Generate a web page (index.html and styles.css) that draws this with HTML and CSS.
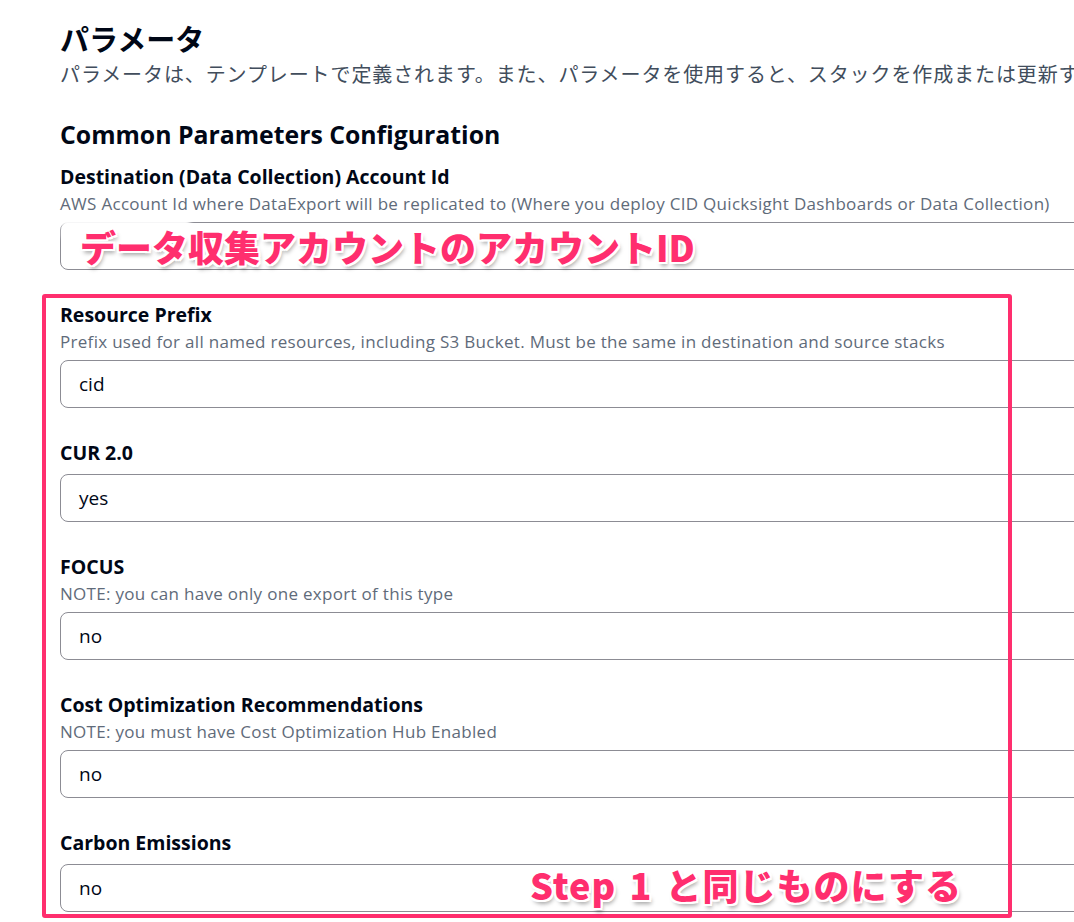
FILE: index.html
```html
<!DOCTYPE html>
<html lang="ja">
<head>
  <meta charset="UTF-8">
  <meta name="viewport" content="width=device-width, initial-scale=1.0">
  <title>パラメータ</title>
  <link rel="stylesheet" href="styles.css">
</head>
<body>
  <div class="page">
    <h1 class="title">パラメータ</h1>
    <p class="lead">パラメータは、テンプレートで定義されます。また、パラメータを使用すると、スタックを作成または更新するときにカスタム値を入力できます。</p>

    <h2 class="section">Common Parameters Configuration</h2>

    <div class="fields">
      <div class="field">
        <div class="label">Destination (Data Collection) Account Id</div>
        <div class="desc">AWS Account Id where DataExport will be replicated to (Where you deploy CID Quicksight Dashboards or Data Collection)</div>
        <div class="input"></div>
      </div>
      <div class="field">
        <div class="label">Resource Prefix</div>
        <div class="desc">Prefix used for all named resources, including S3 Bucket. Must be the same in destination and source stacks</div>
        <div class="input">cid</div>
      </div>
      <div class="field">
        <div class="label">CUR 2.0</div>
        <div class="input no-desc">yes</div>
      </div>
      <div class="field">
        <div class="label">FOCUS</div>
        <div class="desc">NOTE: you can have only one export of this type</div>
        <div class="input">no</div>
      </div>
      <div class="field">
        <div class="label">Cost Optimization Recommendations</div>
        <div class="desc">NOTE: you must have Cost Optimization Hub Enabled</div>
        <div class="input">no</div>
      </div>
      <div class="field">
        <div class="label">Carbon Emissions</div>
        <div class="input no-desc">no</div>
      </div>
    </div>
  </div>

  <!-- annotations drawn over the screenshot -->
  <div class="blur-patch"></div>
  <div class="note note-account">データ収集アカウントのアカウントID</div>
  <div class="frame"></div>
  <div class="note note-step">Step 1 と同じものにする</div>
</body>
</html>
```

FILE: styles.css
```css
html, body { margin: 0; height: 100%; }
body { font-family: 'Open Sans', 'Noto Sans CJK JP', sans-serif; color: #000716; background: #fff; overflow: hidden; position: relative; }
.page { padding: 20px 0 0 60px; white-space: nowrap; }
.title { font-family: 'Noto Sans CJK JP', sans-serif; font-size: 29px; line-height: 36px; font-weight: 700; margin: 0; }
.lead { font-family: 'Noto Sans CJK JP', sans-serif; font-size: 20px; letter-spacing: 0.9px; line-height: 28px; color: #414d5c; margin: 4px 0 0; }
.section { font-size: 24.8px; line-height: 32px; font-weight: 700; margin: 30px 0 0; }
.fields { margin-top: 15px; display: flex; flex-direction: column; gap: 33px; }
.label { font-size: 19.5px; line-height: 24px; font-weight: 700; margin-bottom: 3px; }
.desc { font-size: 17px; letter-spacing: 0.3px; line-height: 24px; color: #5f6b7a; }
.input { margin-top: 6px; width: 1100px; height: 48px; box-sizing: border-box; border: 1px solid #8c8c94; border-radius: 8px; padding: 0 18px; font-size: 19px; line-height: 46px; }
.input.no-desc { margin-top: 9px; }

.blur-patch { position: absolute; left: 62px; top: 216px; width: 128px; height: 22px; background: rgba(255,255,255,0.92); filter: blur(2px); }
.frame { position: absolute; left: 42px; top: 294px; width: 970px; height: 624px; box-sizing: border-box; border: 4px solid #ff2e6e; border-radius: 3px; }
.note { position: absolute; font-family: 'Noto Sans CJK JP', sans-serif; font-weight: 900; font-size: 36px; line-height: 44px; color: #ff2e6e; white-space: nowrap;
  text-shadow: 2px 0 0 #fff, -2px 0 0 #fff, 0 2px 0 #fff, 0 -2px 0 #fff, 2px 2px 0 #fff, -2px -2px 0 #fff, 2px -2px 0 #fff, -2px 2px 0 #fff, 2px 4px 4px rgba(0,0,0,0.35); }
.note-account { left: 80px; top: 224px; }
.note-step { left: 530px; top: 862px; letter-spacing: 1px; word-spacing: 4px; }
```
